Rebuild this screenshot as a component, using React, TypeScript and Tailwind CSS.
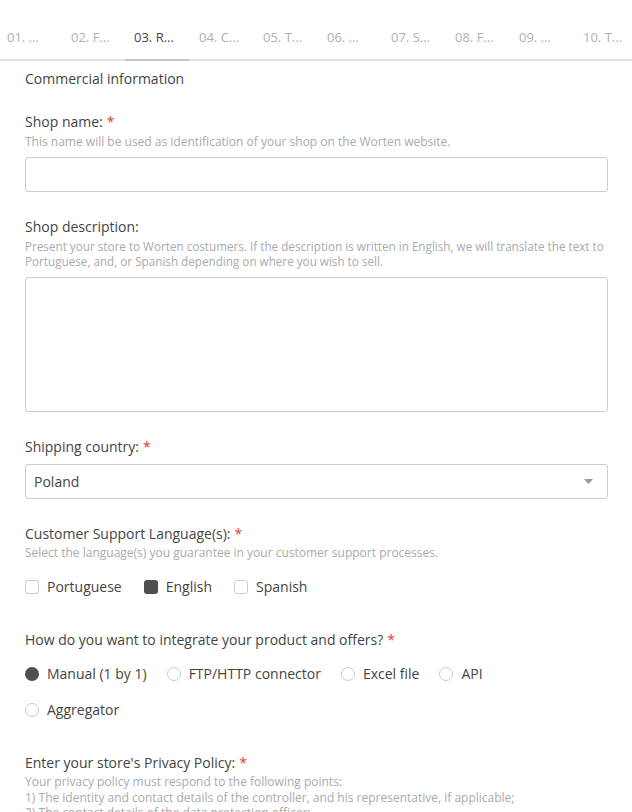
import React from "react"

const tabs = ["01. ...", "02. F...", "03. R...", "04. C...", "05. T...", "06. ...", "07. S...", "08. F...", "09. ...", "10. T..."]

function Label({ text, required }: { text: string; required?: boolean }) {
  return (
    <div className="text-[14px] leading-[20px] text-[#444]">
      {text}
      {required && <span className="ml-1 text-[#e53935]">*</span>}
    </div>
  )
}

function Help({ children }: { children: React.ReactNode }) {
  return <div className="text-[12px] leading-[15px] text-[#aaa]">{children}</div>
}

function Checkbox({ label, checked }: { label: string; checked?: boolean }) {
  return (
    <label className="flex items-center gap-[8px]">
      <span
        className={
          checked
            ? "h-[14px] w-[14px] rounded-[3px] bg-[#4f4f4f]"
            : "h-[14px] w-[14px] rounded-[3px] border border-[#ccc] bg-white"
        }
      />
      <span>{label}</span>
    </label>
  )
}

function Radio({ label, checked }: { label: string; checked?: boolean }) {
  return (
    <label className="flex items-center gap-[8px]">
      <span
        className={
          checked
            ? "h-[14px] w-[14px] rounded-full bg-[#4f4f4f]"
            : "h-[14px] w-[14px] rounded-full border border-[#ccc] bg-white"
        }
      />
      <span>{label}</span>
    </label>
  )
}

export default function App() {
  return (
    <div className="h-[812px] w-[632px] overflow-hidden bg-white" style={{ fontFamily: '"Open Sans", "Liberation Sans", sans-serif' }}>
      {/* step tabs */}
      <div className="relative border-b-2 border-[#e4e4e4]">
        <div className="-ml-[3px] flex">
          {tabs.map((t, i) => (
            <div
              key={t}
              className={
                i === 2
                  ? "relative h-[59px] w-[64px] shrink-0 pl-[9px] pt-[27px] text-[13px] leading-[20px] text-[#444]"
                  : "h-[59px] w-[64px] shrink-0 pl-[10px] pt-[27px] text-[13px] leading-[20px] text-[#b0b0b0]"
              }
            >
              {t}
              {i === 2 && <div className="absolute -bottom-[2px] left-0 h-[2px] w-[64px] bg-[#c4c4c4]" />}
            </div>
          ))}
        </div>
      </div>

      <div className="px-[25px] pr-[24px]">
        <div className="mt-[8px] text-[14px] leading-[20px] text-[#444]">Commercial information</div>

        <div className="mt-[23px]">
          <Label text="Shop name:" required />
          <div className="mt-[2px]">
            <Help>This name will be used as identification of your shop on the Worten website.</Help>
          </div>
          <div className="mt-[8px] h-[35px] rounded-[3px] border border-[#ccc]" />
        </div>

        <div className="mt-[25px]">
          <Label text="Shop description:" />
          <div className="mt-[1.5px] text-[11.7px] leading-[15px] text-[#aaa]">
            Present your store to Worten costumers. If the description is written in English, we will translate the text to Portuguese, and, or Spanish depending on where you wish to sell.
          </div>
          <div className="mt-[8px] h-[135px] rounded-[3px] border border-[#ccc]" />
        </div>

        <div className="mt-[25px]">
          <Label text="Shipping country:" required />
          <div className="mt-[7px] flex h-[35px] items-center justify-between rounded-[3px] border border-[#ccc] pl-[8px] pr-[14px] text-[14px] text-[#444]">
            <span>Poland</span>
            <svg width="9" height="5" viewBox="0 0 9 5">
              <path d="M0 0h9L4.5 5z" fill="#999" />
            </svg>
          </div>
        </div>

        <div className="mt-[25px]">
          <Label text="Customer Support Language(s):" required />
          <div className="mt-[1.5px]">
            <Help>Select the language(s) you guarantee in your customer support processes.</Help>
          </div>
          <div className="mt-[17px] flex gap-[22px] text-[14px] leading-[20px] text-[#444]">
            <Checkbox label="Portuguese" />
            <Checkbox label="English" checked />
            <Checkbox label="Spanish" />
          </div>
        </div>

        <div className="mt-[33px]">
          <Label text="How do you want to integrate your product and offers?" required />
          <div className="mt-[14px] flex flex-col gap-[16px] text-[14px] leading-[20px] text-[#444]">
            <div className="flex gap-[20px]">
              <Radio label="Manual (1 by 1)" checked />
              <Radio label="FTP/HTTP connector" />
              <Radio label="Excel file" />
              <Radio label="API" />
            </div>
            <div className="flex">
              <Radio label="Aggregator" />
            </div>
          </div>
        </div>

        <div className="mt-[33px]">
          <Label text="Enter your store's Privacy Policy:" required />
          <div className="mt-[1px] text-[12px] leading-[15.5px] text-[#aaa]">
            <div>Your privacy policy must respond to the following points:</div>
            <div>1) The identity and contact details of the controller, and his representative, if applicable;</div>
            <div>2) The contact details of the data protection officer;</div>
          </div>
        </div>
      </div>
    </div>
  )
}
